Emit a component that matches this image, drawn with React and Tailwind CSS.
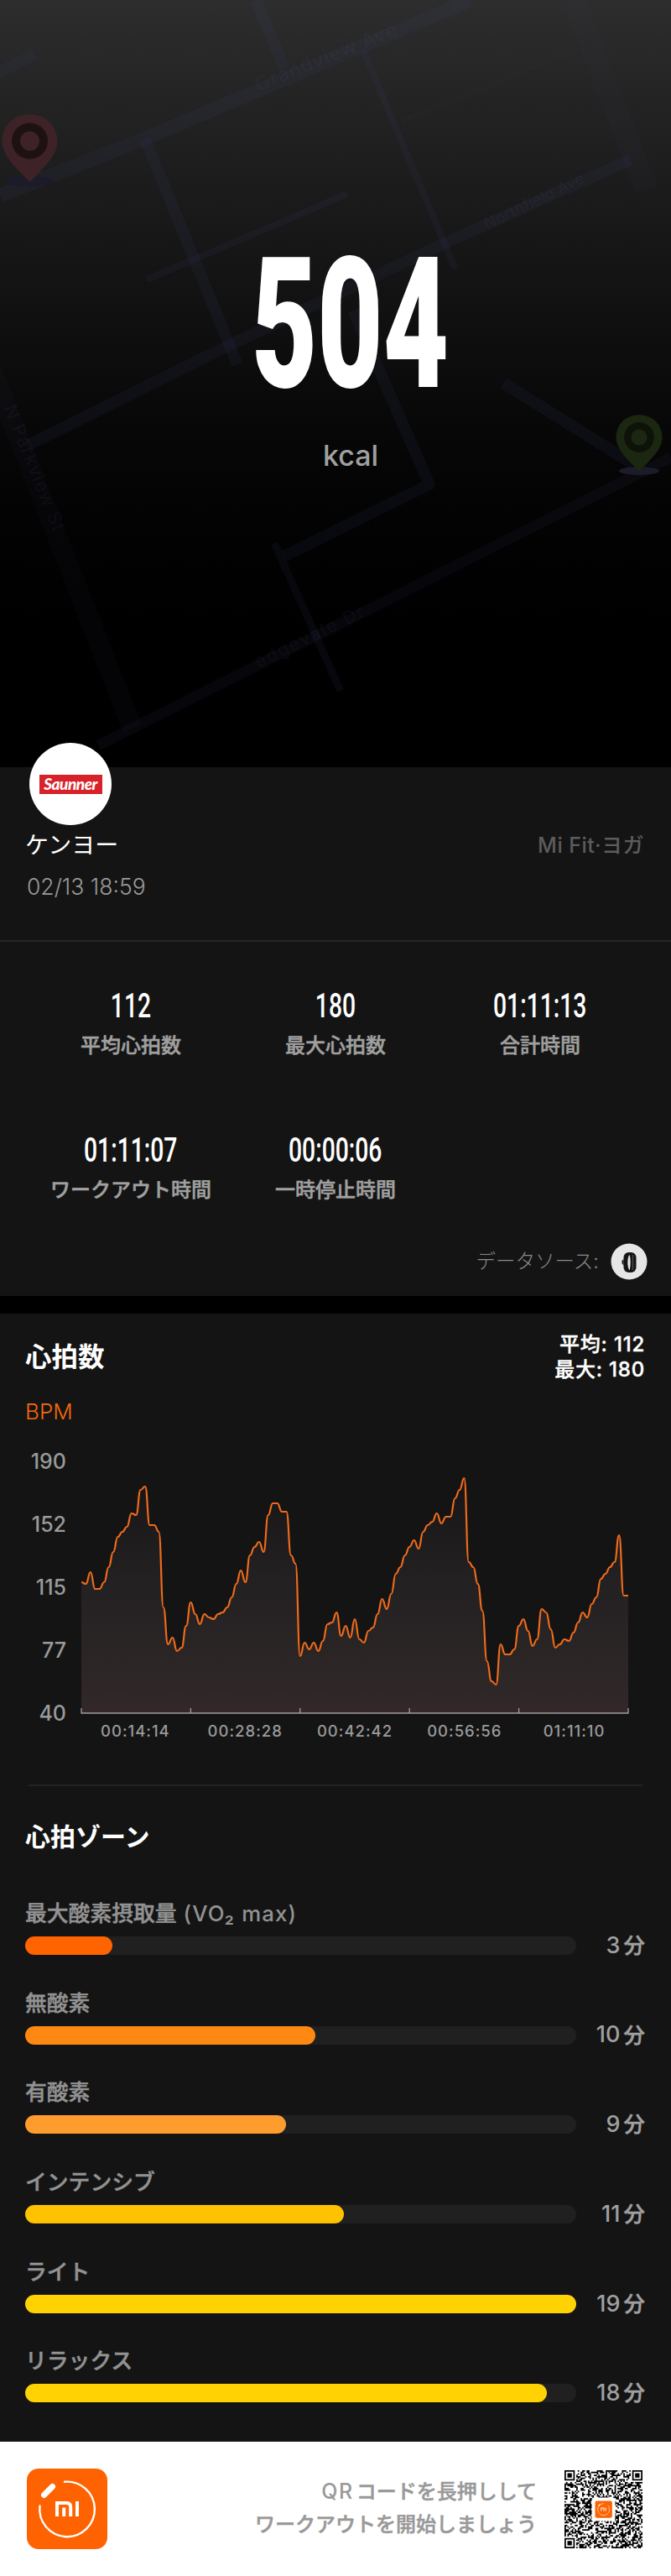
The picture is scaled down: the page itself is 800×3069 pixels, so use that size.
import React from "react";

const stats = [
  { value: "112", label: "平均心拍数" },
  { value: "180", label: "最大心拍数" },
  { value: "01:11:13", label: "合計時間" },
  { value: "01:11:07", label: "ワークアウト時間" },
  { value: "00:00:06", label: "一時停止時間" },
];

const zones = [
  { name: "最大酸素摂取量", note: " (VO₂ max)", minutes: 3, color: "bg-[#ff6400]" },
  { name: "無酸素", minutes: 10, color: "bg-[#ff8812]" },
  { name: "有酸素", minutes: 9, color: "bg-[#ff9c2e]" },
  { name: "インテンシブ", minutes: 11, color: "bg-[#ffc200]" },
  { name: "ライト", minutes: 19, color: "bg-[#ffd303]" },
  { name: "リラックス", minutes: 18, color: "bg-[#ffd303]" },
];

const bpm = [
  118, 117, 124, 114, 114, 118, 127, 136, 145, 148, 151, 159, 158, 173, 175,
  152, 152, 148, 103, 81, 85, 77, 79, 92, 106, 99, 93, 99, 97, 96, 99, 100,
  103, 109, 117, 125, 118, 134, 139, 142, 136, 158, 165, 165, 160, 160, 134,
  129, 74, 82, 78, 82, 77, 83, 93, 94, 100, 86, 92, 85, 96, 84, 82, 89, 91,
  99, 108, 102, 111, 123, 127, 134, 139, 143, 138, 148, 152, 154, 159, 153,
  157, 157, 168, 173, 180, 130, 127, 117, 101, 71, 59, 57, 81, 75, 75, 78, 92,
  96, 89, 80, 84, 102, 100, 90, 79, 81, 84, 83, 88, 94, 100, 97, 105, 109,
  120, 123, 127, 130, 146, 110, 110,
];

const CHART_W = 652;
const CHART_H = 300;

// every step eases in and out horizontally
const buildLine = () => {
  const step = CHART_W / (bpm.length - 1);
  const pts = bpm.map((v, i) => [i * step, CHART_H - (v - 40) * 2]);
  return pts.reduce((d, [x, y], i) => {
    if (i === 0) return `M${x} ${y}`;
    const [px, py] = pts[i - 1];
    const mid = (px + x) / 2;
    return `${d}C${mid} ${py} ${mid} ${y} ${x} ${y}`;
  }, "");
};

const QR_SIZE = 53;

const inFinder = (x, y) =>
  (x < 8 && y < 8) || (x > QR_SIZE - 9 && y < 8) || (x < 8 && y > QR_SIZE - 9);

const buildQr = () => {
  let seed = 20213;
  let d = "";
  for (let y = 0; y < QR_SIZE; y++) {
    for (let x = 0; x < QR_SIZE; x++) {
      seed = (seed * 1103515245 + 12345) % 2147483648;
      const center = x > 18 && x < 34 && y > 18 && y < 34;
      if (inFinder(x, y) || center) continue;
      if ((seed >> 16) % 100 < 52) d += `M${x} ${y}h1v1h-1z`;
    }
  }
  return d;
};

const Pin = ({ x, y, r, color }) => (
  <g transform={`translate(${x} ${y}) scale(${r / 33})`}>
    <ellipse cx="0" cy="48" rx="29" ry="6" fill="#1b1b2b" />
    <path
      d="M0 -32C19 -32 33 -18 33 0C33 19 12 36 0 49C-12 36 -33 19 -33 0C-33 -18 -19 -32 0 -32Z"
      fill={color}
    />
    <circle r="21.5" fill="#000" fillOpacity="0.5" />
    <circle r="11.5" fill={color} />
  </g>
);

const MapBackground = () => (
  <svg
    className="absolute inset-0 h-full w-full"
    viewBox="0 0 800 914"
    fontFamily="Inter, sans-serif"
  >
    <g fill="none" stroke="#44447c" strokeOpacity="0.11" strokeLinejoin="round">
      <path d="M0 233L173 165L561 0" strokeWidth="17" />
      <path d="M-4 88L42 64" strokeWidth="14" />
      <path d="M305 0L339 82" strokeWidth="14" />
      <path d="M433 60L543 321" strokeWidth="8" />
      <path d="M478 145L684 60" strokeWidth="7" strokeOpacity="0.06" />
      <path d="M684 0L771 226" strokeWidth="28" strokeOpacity="0.06" />
      <path d="M173 166L283 434" strokeWidth="14" />
      <path d="M175 333L414 231" strokeWidth="8" />
      <path d="M34 530L276 410L536 287L752 190" strokeWidth="14" />
      <path d="M421 370L478 500L512 577L338 663" strokeWidth="14" />
      <path d="M600 456L755 553" strokeWidth="14" />
      <path d="M800 545L438 727L117 888" strokeWidth="13" strokeOpacity="0.09" />
      <path d="M327 647L406 823" strokeWidth="9" />
      <path d="M-10 440L158 868" strokeWidth="24" strokeOpacity="0.06" />
    </g>
    <g fill="#8080b0" fillOpacity="0.08" fontSize="23">
      <text transform="translate(308 109) rotate(-22)" textLength="180">Grandview Ave</text>
      <text transform="translate(581 274) rotate(-26)" textLength="130" fontSize="19">Northfield Ave</text>
      <text transform="translate(4 486) rotate(68)" textLength="160" fontSize="22">N Parkview St</text>
      <text transform="translate(308 796) rotate(-26)" textLength="142" fontSize="21">edgevale Dr</text>
    </g>
    <Pin x={35.5} y={168} r={33} color="#3d2227" />
    <Pin x={762} y={521} r={27.5} color="#1b2710" />
  </svg>
);

// condensed digits
const Digits = ({ children, className }) => (
  <span className={`inline-block font-[Roboto,sans-serif] whitespace-nowrap ${className}`}>
    {children}
  </span>
);

const FitLogo = ({ className }) => (
  <svg className={className} viewBox="0 0 96 96">
    <rect width="96" height="96" rx="14" fill="#ff6200" />
    <path
      d="M45 15.8A32.8 32.8 0 1 1 15.5 44.5"
      fill="none"
      stroke="#fff"
      strokeWidth="2.4"
      strokeLinecap="round"
    />
    <path d="M20.5 31.5L30.5 21.5" stroke="#fff" strokeWidth="7" strokeLinecap="round" />
    <path d="M36 57V41H47.5Q52.2 41 52.2 46V57" fill="none" stroke="#fff" strokeWidth="4" />
    <path d="M44.2 46.5V57M60 39V57" stroke="#fff" strokeWidth="4" />
  </svg>
);

const QrCode = () => (
  <svg className="h-[93px] w-[93px]" viewBox="0 0 53 53">
    <path d={buildQr()} fill="#000" />
    {[[0, 0], [46, 0], [0, 46]].map(([x, y]) => (
      <g key={`${x}-${y}`} transform={`translate(${x} ${y})`}>
        <path d="M0.5 0.5H6.5V6.5H0.5Z" fill="none" stroke="#000" />
        <rect x="2" y="2" width="3" height="3" />
      </g>
    ))}
    <rect x="18.5" y="18.5" width="16" height="16" rx="2" fill="#fff" />
    <rect x="20.8" y="20.8" width="11.6" height="11.6" rx="1.4" fill="#ff6200" />
    <circle cx="26.6" cy="26.6" r="4" fill="none" stroke="#fff" strokeWidth="0.35" strokeDasharray="19 3" />
    <path d="M23.2 24.2L24.2 23.2" stroke="#fff" strokeWidth="0.9" />
    <path d="M25 27.7V25.7H26.8V27.7M28 25.4V27.7" fill="none" stroke="#fff" strokeWidth="0.6" />
  </svg>
);

const Hero = () => (
  <header className="relative h-[914px] bg-linear-to-b from-[#2d2d2d] to-black">
    <MapBackground />
    <div className="relative flex flex-col items-center pt-[278px] pl-9">
      <Digits className="h-[218px] scale-x-[0.62] text-[218px] leading-[218px] font-black">504</Digits>
      <span className="mt-[26px] text-[34px] leading-[42px] font-medium text-[#a0a0a0]">kcal</span>
    </div>
  </header>
);

const Profile = () => (
  <section className="relative h-[208px] border-b-2 border-[#262626] px-8 pt-[76px]">
    <div className="absolute -top-[29px] left-[35px] flex h-[98px] w-[98px] items-center justify-center rounded-full bg-white">
      <div className="flex h-[23px] w-[75px] items-center justify-center bg-[#d8222a]">
        <span className="font-[Lato,sans-serif] text-[19px] leading-[20px] font-black tracking-[-0.5px] italic">
          Saunner
        </span>
      </div>
    </div>
    <div className="flex items-center justify-between">
      <span className="-ml-[2px] text-[28px] leading-[34px]">ケンヨー</span>
      <span className="text-[25px] leading-[34px] font-medium tracking-[0.5px] text-[#5c5c5c]">Mi Fit·ヨガ</span>
    </div>
    <div className="mt-[15px] text-[26.5px] leading-[34px] font-light text-[#9a9a9a]">02/13 18:59</div>
  </section>
);

const Stats = () => (
  <section className="h-[422px] px-[34px] pt-[54px]">
    <div className="grid grid-cols-3">
      {stats.map((s) => (
        <div key={s.label} className="flex h-[172px] flex-col items-center">
          <Digits className="scale-x-[0.69] text-[41px] leading-[44px] font-medium">{s.value}</Digits>
          <span className="mt-[10px] text-[24px] leading-[32px] font-medium whitespace-nowrap text-[#a0a0a0] [-webkit-text-stroke:0.5px]">
            {s.label}
          </span>
        </div>
      ))}
    </div>
    <div className="-mt-[39px] flex items-center justify-end gap-[14px] pr-[1px]">
      <span className="text-[23.5px] leading-[44px] font-light text-[#8a8a8a]">データソース:</span>
      <svg className="-mr-[7px] h-[44px] w-[44px]" viewBox="0 0 44 44">
        <circle cx="22" cy="22" r="21.5" fill="#e6e6e6" />
        <rect x="15.5" y="11" width="15" height="24" rx="6" fill="#151515" />
        <path d="M22.5 14C19.6 17 19.6 29 22.5 32.5C24 29 24 17 22.5 14Z" fill="#e6e6e6" />
        <path d="M26.5 14V32" stroke="#4a4a4a" strokeWidth="1.5" />
        <path d="M15.5 19L13.5 21V24L15.5 27" fill="#151515" />
      </svg>
    </div>
  </section>
);

const HeartRateChart = () => {
  const line = buildLine();
  return (
    <div className="mt-[20px] flex">
      <div className="flex h-[344px] w-[49px] flex-col justify-between text-right text-[25px] leading-[44px] font-medium text-[#9a9a9a]">
        {[190, 152, 115, 77, 40].map((v) => (
          <span key={v}>{v}</span>
        ))}
      </div>
      <div className="ml-[17px] w-[654px] pt-[22px]">
        <svg className="h-[302px] w-[654px]" viewBox="-1 0 654 302">
          <defs>
            <linearGradient id="area" x1="0" y1="0" x2="0" y2="300" gradientUnits="userSpaceOnUse">
              <stop offset="0" stopColor="#151415" />
              <stop offset="0.5" stopColor="#242122" />
              <stop offset="0.9" stopColor="#2e2727" />
              <stop offset="1" stopColor="#34272b" />
            </linearGradient>
          </defs>
          <path d={`${line}V300H0Z`} fill="url(#area)" />
          <path d={line} fill="none" stroke="#ee6b1b" strokeWidth="2.2" strokeLinejoin="round" />
          <path
            d="M0 294V300H652V294M130.4 294V300M260.8 294V300M391.2 294V300M521.6 294V300"
            fill="none"
            stroke="#a39da0"
            strokeWidth="1.3"
          />
        </svg>
        <div className="mt-[4px] grid grid-cols-5 text-center text-[18.5px] leading-[30px] font-medium tracking-[1px] text-[#9a9a9a]">
          {["00:14:14", "00:28:28", "00:42:42", "00:56:56", "01:11:10"].map((t) => (
            <span key={t}>{t}</span>
          ))}
        </div>
      </div>
    </div>
  );
};

const HeartRate = () => (
  <section className="h-[561px] px-[30px] pt-[22px]">
    <div className="flex h-[60px] items-start justify-between">
      <h2 className="pt-[7px] text-[31.5px] leading-[46px] font-bold">心拍数</h2>
      <div className="pr-[1px] text-right text-[24px] leading-[30px] font-medium tracking-[0.8px] [-webkit-text-stroke:0.4px]">
        <p>平均: 112</p>
        <p>最大: 180</p>
      </div>
    </div>
    <p className="mt-[18px] text-[26px] leading-[34px] font-light text-[#f8690c]">BPM</p>
    <HeartRateChart />
  </section>
);

const Zones = () => {
  const longest = Math.max(...zones.map((z) => z.minutes));
  return (
    <section className="h-[783px] px-[30px]">
      <div className="mx-1 h-[2px] bg-[#232323]" />
      <h2 className="pt-[37px] text-[30px] leading-[46px] font-bold">心拍ゾーン</h2>
      <div className="mt-[49px]">
        {zones.map((z) => (
          <div key={z.name} className="h-[106.7px]">
            <p className="text-[25.8px] leading-[40px] font-medium text-[#929292] [-webkit-text-stroke:0.5px]">
              {z.name}
              {z.note && <span className="tracking-[1.1px] whitespace-pre [-webkit-text-stroke:0px]">{z.note}</span>}
            </p>
            <div className="mt-[7px] flex h-[22px] items-center">
              <div className="h-[22px] w-[657px] rounded-full bg-[#202020]">
                <div
                  className={`h-full rounded-full ${z.color}`}
                  style={{ width: `${(z.minutes / longest) * 100}%` }}
                />
              </div>
              <div className="flex flex-1 items-center justify-end gap-[4px] pr-[1px] font-medium text-[#a0a0a0]">
                <span className="text-[27px]">{z.minutes}</span>
                <span className="text-[25.5px] [-webkit-text-stroke:0.5px]">分</span>
              </div>
            </div>
          </div>
        ))}
      </div>
    </section>
  );
};

const Footer = () => (
  <footer className="flex h-[160px] items-center bg-white pr-[34px] pl-8">
    <FitLogo className="h-24 w-24" />
    <p className="mr-[33px] -mt-[3px] flex-1 text-right text-[24px] leading-[39px] font-medium text-[#999] [-webkit-text-stroke:0.5px]">
      <span className="mr-[3px] text-[25px] tracking-[1.5px] [-webkit-text-stroke:0px]">QR</span>コードを長押しして
      <br />
      ワークアウトを開始しましょう
    </p>
    <QrCode />
  </footer>
);

export default function App() {
  return (
    <div className="w-[800px] bg-[#141414] font-[Inter,'Noto_Sans_CJK_JP',sans-serif] text-white">
      <Hero />
      <Profile />
      <Stats />
      <div className="h-[21px] bg-black" />
      <HeartRate />
      <Zones />
      <Footer />
    </div>
  );
}
